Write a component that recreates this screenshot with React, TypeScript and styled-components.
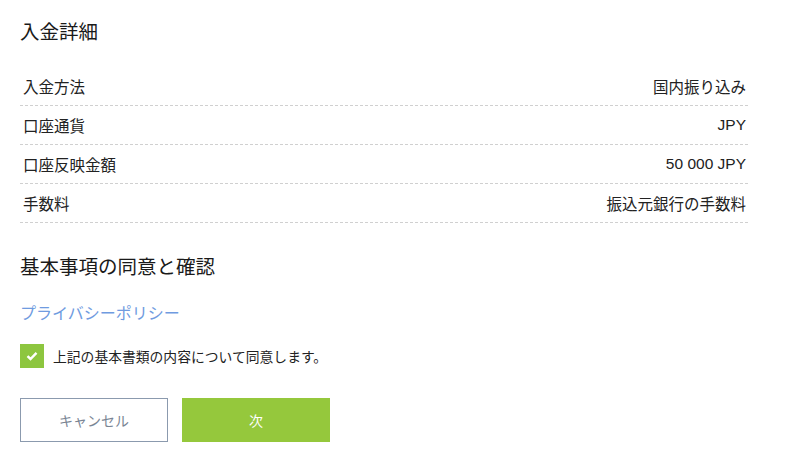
import styled, { createGlobalStyle } from 'styled-components'

const GlobalStyle = createGlobalStyle`
  body {
    margin: 0;
    background: #fff;
    font-family: 'Noto Sans CJK JP', 'Liberation Sans', sans-serif;
    color: #1a1a1a;
  }
`

const Page = styled.div`
  width: 728px;
  padding: 16px 20px 0 20px;
  display: flex;
  flex-direction: column;
`

const SectionTitle = styled.h2<{ $mt?: number }>`
  margin: ${(p) => p.$mt ?? 0}px 0 0 0;
  font-size: 19.5px;
  font-weight: 400;
  line-height: 30px;
  color: #1a1a1a;
`

const Table = styled.div`
  margin-top: 21px;
  display: flex;
  flex-direction: column;
`

const Row = styled.div`
  height: 38px;
  display: flex;
  justify-content: space-between;
  align-items: center;
  padding: 0 2px 0 3px;
  border-bottom: 1px dashed #d0d0d0;
  font-size: 15.5px;
`

const Label = styled.span`
  color: #222;
`

const Value = styled.span`
  color: #222;
  font-family: 'Liberation Sans', 'Noto Sans CJK JP', sans-serif;
`

const PolicyLink = styled.a`
  margin-top: 19px;
  font-size: 16px;
  color: #6f9be0;
  text-decoration: none;
  line-height: 24px;
`

const AgreeRow = styled.label`
  margin-top: 20px;
  display: flex;
  align-items: center;
  gap: 9px;
  font-size: 13.8px;
  color: #222;
`

const CheckBox = styled.span`
  width: 24px;
  height: 24px;
  background: #8dc63f;
  display: flex;
  align-items: center;
  justify-content: center;
`

const Buttons = styled.div`
  margin-top: 30px;
  display: flex;
  gap: 14px;
`

const Button = styled.button<{ $primary?: boolean }>`
  width: 148px;
  height: 44px;
  font-family: inherit;
  font-size: 14px;
  cursor: pointer;
  border: 1px solid ${(p) => (p.$primary ? '#95c83c' : '#8b9aae')};
  background: ${(p) => (p.$primary ? '#95c83c' : '#fff')};
  color: ${(p) => (p.$primary ? '#fff' : '#7a8594')};
`

const rows = [
  { label: '入金方法', value: '国内振り込み' },
  { label: '口座通貨', value: 'JPY' },
  { label: '口座反映金額', value: '50 000 JPY' },
  { label: '手数料', value: '振込元銀行の手数料' },
]

export default function App() {
  return (
    <>
      <GlobalStyle />
      <Page>
        <SectionTitle>入金詳細</SectionTitle>
        <Table>
          {rows.map((r) => (
            <Row key={r.label}>
              <Label>{r.label}</Label>
              <Value>{r.value}</Value>
            </Row>
          ))}
        </Table>
        <SectionTitle $mt={28}>基本事項の同意と確認</SectionTitle>
        <PolicyLink href="#">プライバシーポリシー</PolicyLink>
        <AgreeRow>
          <CheckBox>
            <svg width="12" height="10" viewBox="0 0 12 10">
              <path d="M1.5 5.2 L4.5 8 L10.5 1.8" fill="none" stroke="#fff" strokeWidth="2.4" />
            </svg>
          </CheckBox>
          上記の基本書類の内容について同意します。
        </AgreeRow>
        <Buttons>
          <Button>キャンセル</Button>
          <Button $primary>次</Button>
        </Buttons>
      </Page>
    </>
  )
}
